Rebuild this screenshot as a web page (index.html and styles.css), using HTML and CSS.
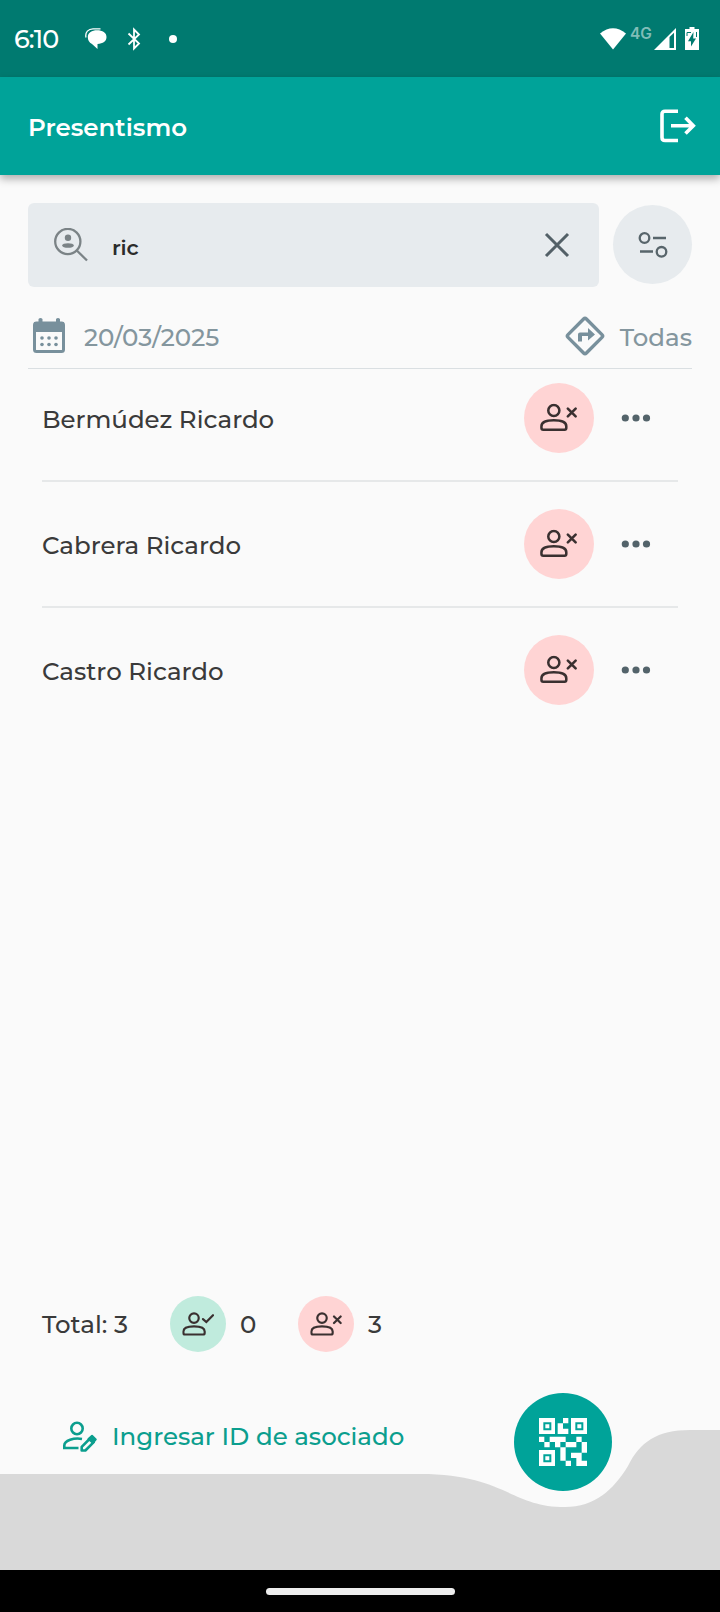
FILE: index.html
```html
<!DOCTYPE html>
<html lang="es">
<head>
<meta charset="utf-8">
<title>Presentismo</title>
<link rel="stylesheet" href="styles.css">
</head>
<body>
<svg class="defs" width="0" height="0" aria-hidden="true">
  <symbol id="person" viewBox="0 0 38 30">
    <circle cx="14.2" cy="7.3" r="5.7"/>
    <path d="M1.5 23.5C1.5 18.8 8 17.3 14.2 17.3S27 18.8 27 23.5V25.2Q27 27 25.2 27H3.3Q1.5 27 1.5 25.2Z"/>
  </symbol>
  <symbol id="absent" viewBox="0 0 38 30">
    <use href="#person" width="38" height="30"/>
    <path d="M28.6 5.3 36.6 13.3M36.6 5.3 28.6 13.3"/>
  </symbol>
  <symbol id="present" viewBox="0 0 38 30">
    <use href="#person" width="38" height="30"/>
    <path d="M25 8.5 29 12 37 3.8"/>
  </symbol>
</svg>
<div class="screen">
  <div class="statusbar">
    <span class="clock">6:10</span>
    <svg class="chat" width="22" height="22" viewBox="0 0 22 22"><path fill="#fff" d="M12 2.200C17.500 2.200 21.500 4.500 21.500 9S18 15.500 12.500 16V21L7 16C4 14.500 2.800 12 2.800 9C2.800 4.500 7 2.200 12 2.200Z"/><path fill="none" stroke="#fff" stroke-width="1.300" d="M1 9.500C-.2 4 3.500.8 8 .8H15.500"/></svg>
    <svg class="bluetooth" width="14" height="24" viewBox="0 0 14 24"><path fill="none" stroke="#fff" stroke-width="1.800" d="M1.500 6.500 12 16.500 7 21.500V2.500L12 7.500 1.500 17.500"/></svg>
    <span class="dot"></span>
    <svg class="wifi" width="26" height="22" viewBox="0 0 26 22"><path fill="#fff" d="M0 5.500Q13-5 26 5.500L13 21.500Z"/></svg>
    <span class="network">4G</span>
    <svg class="signal" width="22" height="22" viewBox="0 0 22 22"><path fill="#fff" fill-rule="evenodd" d="M0 22 22 0V22ZM15.500 9V20H20V4.800Z"/></svg>
    <svg class="battery" width="14" height="23" viewBox="0 0 14 23"><path fill="#fff" d="M4.500 0H9.500V2H14V23H0V2H4.500Z"/><path fill="#007a70" d="M8.500 5 3 14.300H6V19.500L11 11.500H8.200Z"/><path fill="none" stroke="#007a70" d="M2 9V5.500H6M11.500 5V10"/></svg>
  </div>
  <header class="appbar">
    <h1 class="title">Presentismo</h1>
    <svg width="36" height="34" viewBox="0 0 36 34" fill="none" stroke="#fff" stroke-width="3.600"><path d="M18 2.300H5Q2 2.300 2 5.300V28.500Q2 31.500 5 31.500H18"/><path d="M11 16.700H33M25.500 8.800 33.300 16.700 25.500 24.600"/></svg>
  </header>
  <main class="content">
    <div class="searchrow">
      <div class="search">
        <svg width="34" height="34" viewBox="0 0 34 34" fill="none" stroke="#7b8386" stroke-width="2.300"><circle cx="13.800" cy="13.500" r="12.600"/><path d="M22.800 22.500 33 32.500"/><circle cx="14" cy="9.800" r="3.200" fill="#7b8386" stroke="none"/><ellipse cx="14" cy="17.500" rx="5.800" ry="2.300" fill="#7b8386" stroke="none"/></svg>
        <span class="query">ric</span>
        <svg class="clear" width="26" height="26" viewBox="0 0 26 26"><path fill="none" stroke="#536067" stroke-width="3" d="M2 2 24 24M24 2 2 24"/></svg>
      </div>
      <div class="filter">
        <svg width="30" height="28" viewBox="0 0 30 28" fill="none" stroke="#58656b" stroke-width="2.300"><circle cx="6.500" cy="7" r="4.800"/><path d="M15 7H28M2 20.500H15"/><circle cx="23.500" cy="20.800" r="4.800"/></svg>
      </div>
    </div>
    <div class="daterow">
      <svg class="calendar" width="32" height="36" viewBox="0 0 32 36"><rect x="1.500" y="5" width="29" height="28.500" rx="2" fill="none" stroke="#78909c" stroke-width="3"/><path fill="#78909c" d="M1 4H31V14H1ZM5.500 1Q7.500-1 9.500 1V5H5.500ZM23 1Q25-1 27 1V5H23Z"/><g fill="#78909c"><circle cx="9" cy="20" r="1.800"/><circle cx="16" cy="20" r="1.800"/><circle cx="23" cy="20" r="1.800"/><circle cx="9" cy="26.500" r="1.800"/><circle cx="16" cy="26.500" r="1.800"/><circle cx="23" cy="26.500" r="1.800"/></g></svg>
      <span class="date">20/03/2025</span>
      <svg class="direction" width="40" height="40" viewBox="0 0 40 40"><rect x="7" y="7" width="26" height="26" rx="2" transform="rotate(45 20 20)" fill="none" stroke="#78909c" stroke-width="3.400"/><path fill="#78909c" d="M13 25.500V18.500Q13 16.500 15 16.500H23V12L30 18.500 23 24.500V20H17V25.500Z"/></svg>
      <span class="all">Todas</span>
    </div>
    <ul class="list">
      <li class="row"><span class="name">Bermúdez Ricardo</span><span class="badge"><svg class="ico" width="37" height="30"><use href="#absent"/></svg></span><svg width="30" height="8" fill="#53636a"><circle cx="4.300" cy="4" r="3.600"/><circle cx="15" cy="4" r="3.600"/><circle cx="25.500" cy="4" r="3.600"/></svg></li>
      <li class="row"><span class="name">Cabrera Ricardo</span><span class="badge"><svg class="ico" width="37" height="30"><use href="#absent"/></svg></span><svg width="30" height="8" fill="#53636a"><circle cx="4.300" cy="4" r="3.600"/><circle cx="15" cy="4" r="3.600"/><circle cx="25.500" cy="4" r="3.600"/></svg></li>
      <li class="row"><span class="name">Castro Ricardo</span><span class="badge"><svg class="ico" width="37" height="30"><use href="#absent"/></svg></span><svg width="30" height="8" fill="#53636a"><circle cx="4.300" cy="4" r="3.600"/><circle cx="15" cy="4" r="3.600"/><circle cx="25.500" cy="4" r="3.600"/></svg></li>
    </ul>
    <div class="totals">
      <span class="total">Total: 3</span>
      <span class="badge small green"><svg class="ico" width="32" height="25"><use href="#present"/></svg></span>
      <span class="count">0</span>
      <span class="badge small"><svg class="ico" width="32" height="25"><use href="#absent"/></svg></span>
      <span class="count">3</span>
    </div>
  </main>
  <footer class="footer">
    <svg class="wave" width="720" height="192" viewBox="0 0 720 192"><path fill="#d9d9d9" d="M0 96H420C505 96 510 129 565 129C595 129 613 112 628 88C640 64 657 52 690 52H720V192H0Z"/></svg>
    <a class="enter">
      <svg width="36" height="32" viewBox="0 0 36 32" fill="none" stroke="#0b9e8e" stroke-width="2.600"><circle cx="15" cy="7.500" r="5.700"/><path d="M20 18C12 16.500 2.300 19.500 2.300 24.500V27H16.500"/><path stroke-linejoin="round" d="M19.700 29.500V25.800L28 17.500 31.700 21.200 23.400 29.500Z"/><path fill="#0b9e8e" stroke="#0b9e8e" stroke-width="2" stroke-linejoin="round" d="M26.500 18 30 14.800 33.800 18.500 31 22Z"/></svg>
      <span class="entertext">Ingresar ID de asociado</span>
    </a>
    <div class="fab">
      <svg width="48" height="48" viewBox="0 0 144 144"><path fill="#fff" fill-rule="evenodd" d="M0 0H48V48H0ZM13 13V37H37V13ZM19 19H31V31H19ZM96 0H144V48H96ZM109 13V37H133V13ZM115 19H127V31H115ZM0 96H48V144H0ZM13 109V133H37V109ZM19 115H31V127H19Z"/><path fill="#fff" d="M72 0H88V16H72V32H88V48H56V16H72ZM0 56H16V72H0ZM32 56H80V72H32ZM112 56H128V72H112ZM16 72H32V88H16ZM48 72H64V88H48ZM80 72H112V88H80ZM128 72H144V104H128ZM64 88H80V128H64ZM96 104H128V128H144V144H112V120H96ZM80 128H96V144H80Z"/></svg>
    </div>
  </footer>
  <div class="navbar"><span class="pill"></span></div>
</div>
</body>
</html>
```
FILE: styles.css
```css
* { box-sizing: border-box; margin: 0; padding: 0; }
body { width: 720px; height: 1612px; background: #fafafa; font-family: Montserrat, Inter, sans-serif; font-size: 24.5px; font-weight: 500; line-height: 30px; color: #3a3a3a; }
svg { display: block; flex: none; }
span { white-space: nowrap; }
.defs { position: absolute; }
.screen { display: flex; flex-direction: column; height: 1612px; }
.statusbar { display: flex; align-items: center; height: 77px; flex: none; padding: 0 21px 0 14px; background: #007a70; color: #fff; }
.clock { width: 71px; font-size: 25.5px; letter-spacing: -0.9px; }
.bluetooth { margin-left: 20px; }
.dot { width: 8px; height: 8px; margin-left: 28px; border-radius: 50%; background: #fff; }
.wifi { margin-left: auto; }
.network { width: 22px; margin: -9px 2px 0 4px; font-family: Inter, sans-serif; font-size: 15.5px; font-weight: 600; color: #80bdb8; }
.battery { margin-left: 9px; }
.appbar { display: flex; align-items: center; justify-content: space-between; height: 98px; flex: none; padding: 0 24px 0 28px; background: #00a399; color: #fff; box-shadow: 0 4px 8px rgba(0,0,0,.3); }
.title { font-size: 24.5px; font-weight: 600; padding-top: 1px; }
.content { display: flex; flex-direction: column; flex: 1; padding: 28px 28px 0; }
.searchrow { display: flex; align-items: center; gap: 14px; height: 84px; }
.search { display: flex; align-items: center; width: 571px; height: 84px; padding: 0 29px 0 26px; border-radius: 6px; background: #e7ebee; }
.query { margin: 5px 0 0 24px; font-size: 21px; font-weight: 600; letter-spacing: -0.2px; color: #2b2b2b; }
.clear { margin-left: auto; }
.filter { display: grid; place-items: center; width: 79px; height: 79px; margin-top: -1px; border-radius: 50%; background: #e7ebee; }
.daterow { display: flex; align-items: center; height: 82px; padding-top: 17px; border-bottom: 1px solid #dadfe2; color: #84969e; }
.calendar { margin-left: 5px; }
.date { margin-left: 19px; padding-top: 2px; }
.direction { margin-left: auto; }
.all { margin-left: 15px; padding-top: 2px; }
.list { list-style: none; padding: 0 14px; }
.row { display: flex; align-items: center; height: 126px; padding-right: 27px; border-bottom: 2px solid #e6e8e9; }
.row:first-child { height: 113px; padding-bottom: 14px; }
.row:last-child { height: 124px; border: 0; }
.name { flex: 1; padding-top: 2px; }
.badge { display: grid; place-items: center; width: 70px; height: 70px; margin-right: 27px; padding-right: 1px; border-radius: 50%; background: #ffd4d4; }
.ico { fill: none; stroke: #3a3030; stroke-width: 2.600px; stroke-linecap: round; }
.small { width: 56px; height: 56px; margin-right: 14px; }
.green { background: #c0ebdd; }
.totals { display: flex; align-items: center; height: 56px; margin: auto 14px 26px; }
.total { width: 128px; }
.count { width: 58px; }
.footer { position: relative; display: flex; align-items: flex-start; height: 192px; flex: none; }
.wave { position: absolute; left: 0; top: 0; }
.enter { position: relative; display: flex; align-items: center; gap: 14px; padding: 43px 0 0 62px; color: #0b9e8e; }
.entertext { padding-bottom: 2px; }
.fab { position: absolute; left: 514px; top: 15px; display: grid; place-items: center; width: 98px; height: 98px; border-radius: 50%; background: #00a399; }
.navbar { display: grid; place-items: center; height: 42px; flex: none; background: #000; }
.pill { width: 189px; height: 7px; border-radius: 4px; background: #ededed; }
```
